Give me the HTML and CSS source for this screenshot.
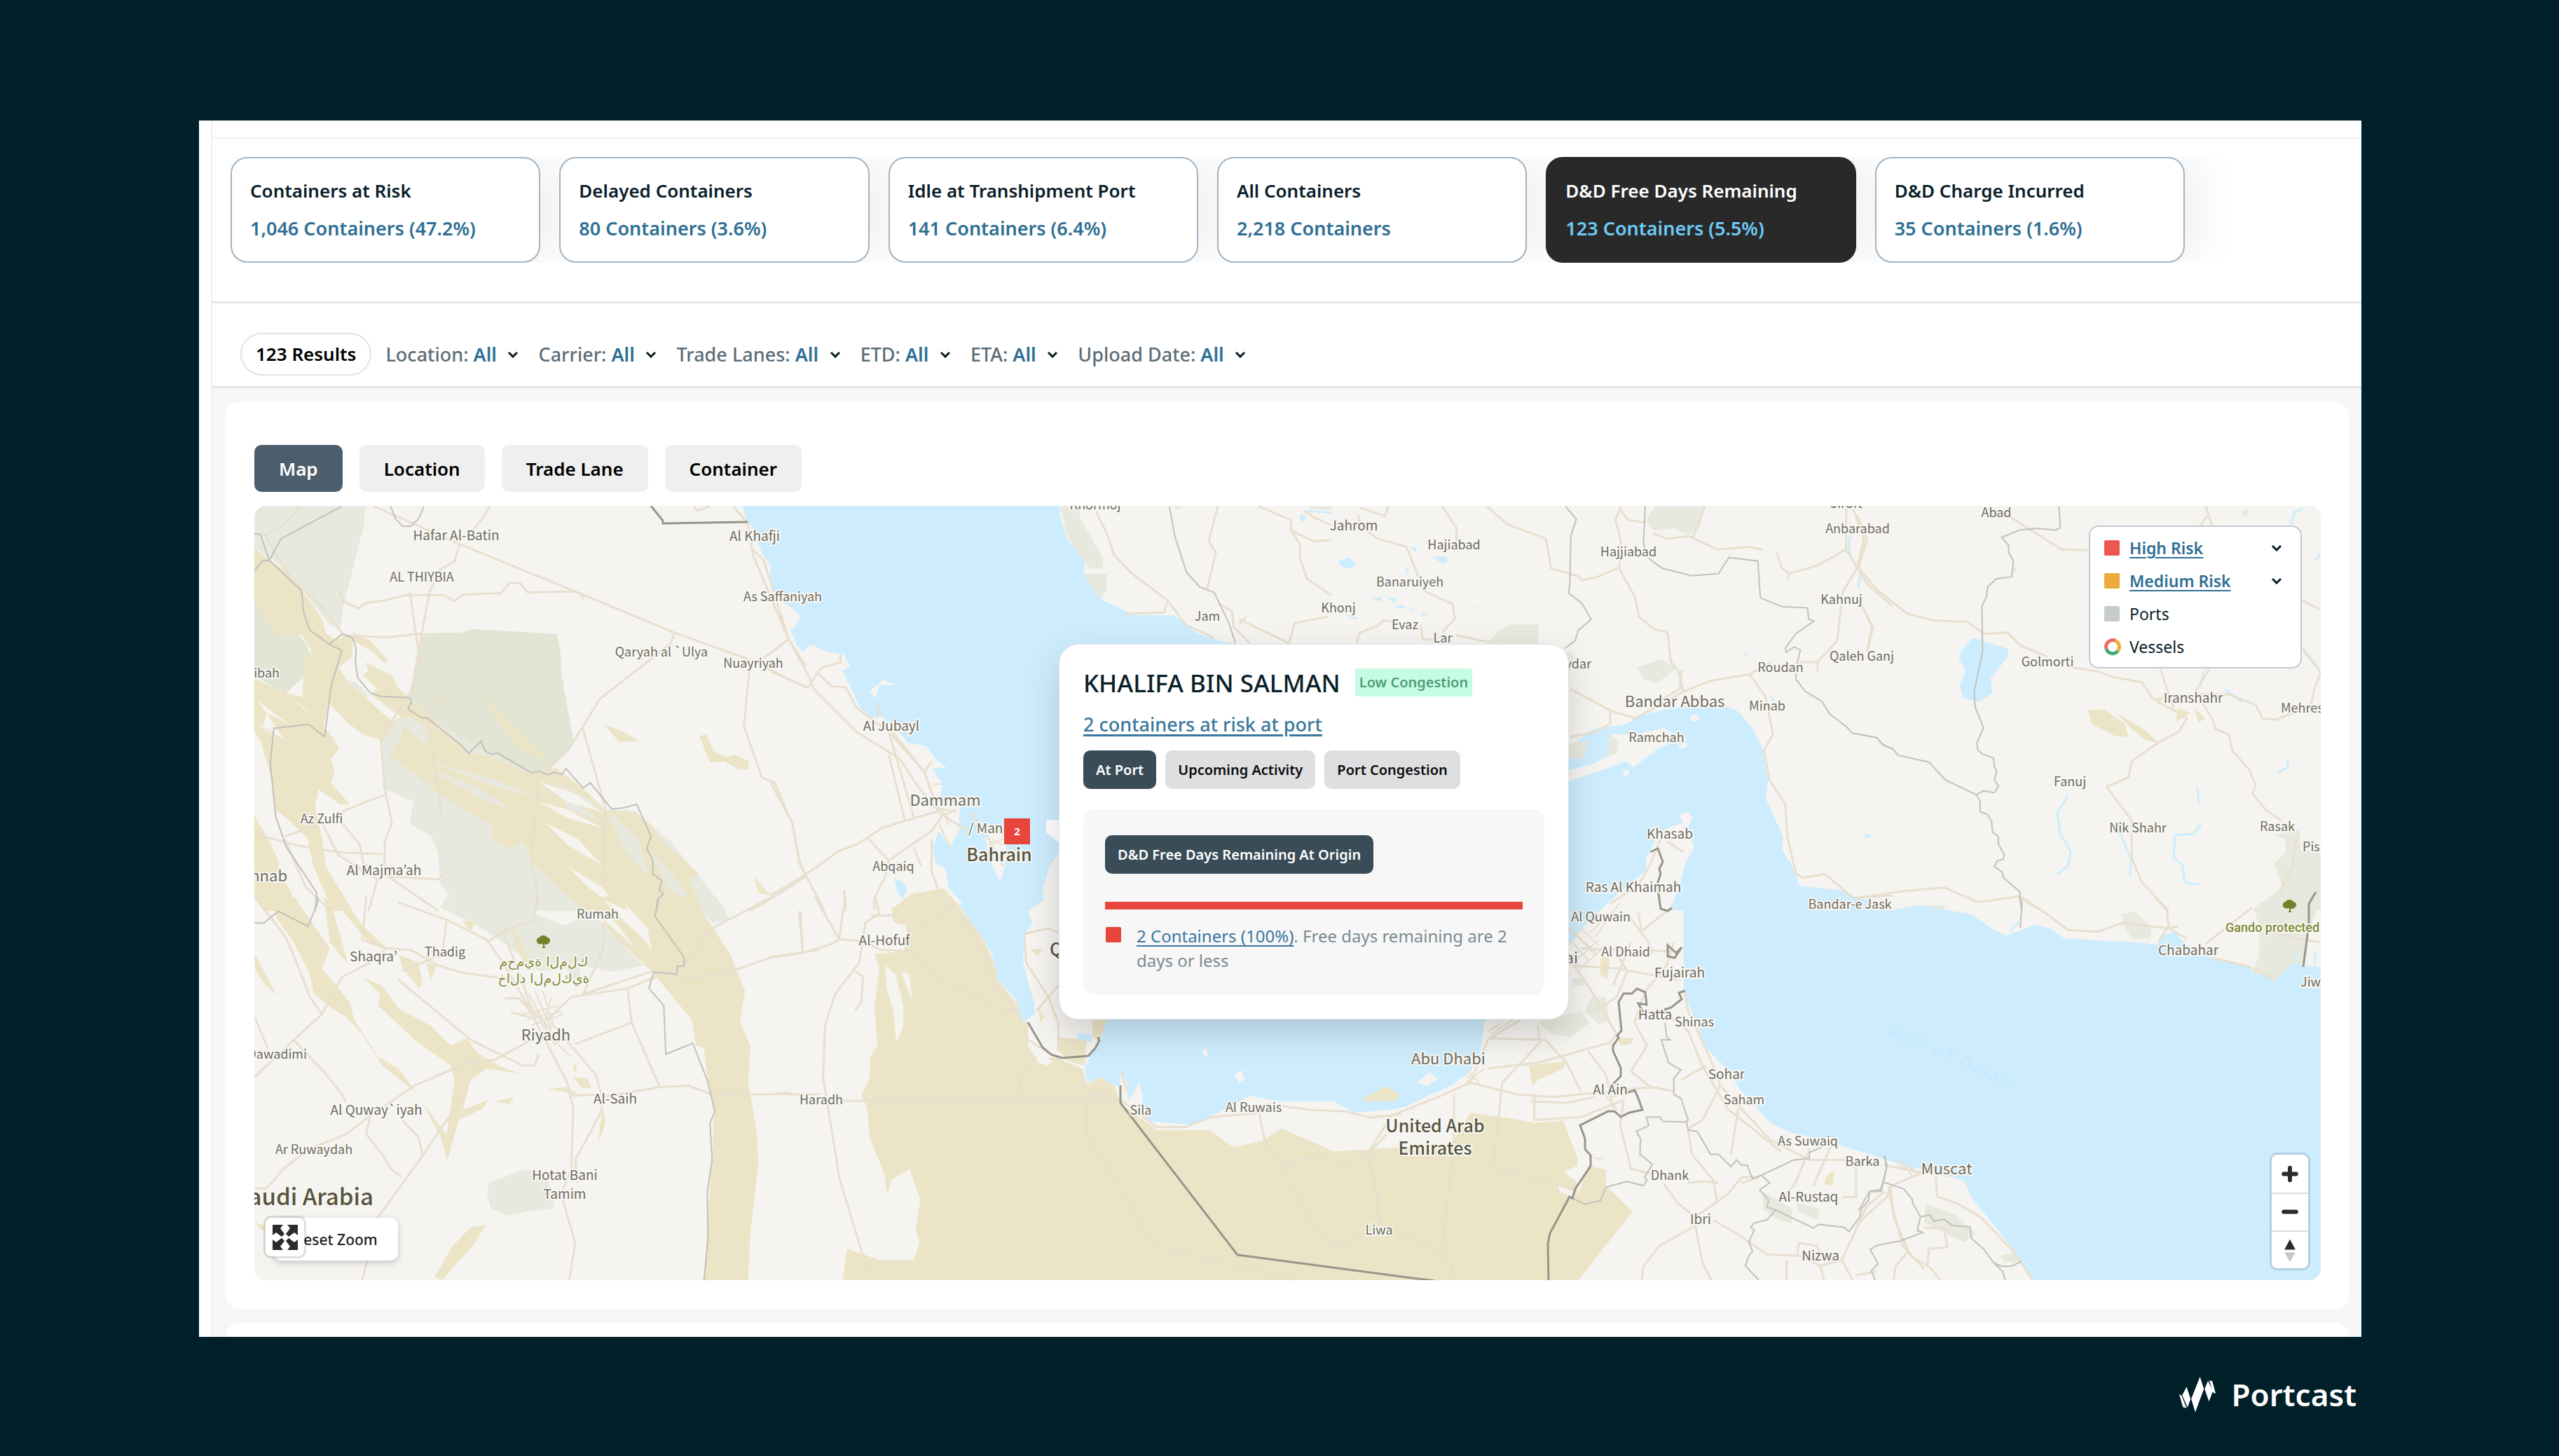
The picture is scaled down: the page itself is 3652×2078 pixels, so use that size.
FILE: index.html
```html
<!DOCTYPE html>
<html lang="en">
<head>
<meta charset="utf-8">
<title>Portcast – D&amp;D Free Days Remaining</title>
<link rel="stylesheet" href="styles.css">
</head>
<body>
<main class="frame">
  <div class="app">
    <div class="topbar"></div>
    <section class="summary">
      <div class="cards">
        <button class="card"><span class="card-title">Containers at Risk</span><span class="card-value">1,046 Containers (47.2%)</span></button>
        <button class="card"><span class="card-title">Delayed Containers</span><span class="card-value">80 Containers (3.6%)</span></button>
        <button class="card"><span class="card-title">Idle at Transhipment Port</span><span class="card-value">141 Containers (6.4%)</span></button>
        <button class="card"><span class="card-title">All Containers</span><span class="card-value">2,218 Containers</span></button>
        <button class="card card-active"><span class="card-title">D&amp;D Free Days Remaining</span><span class="card-value">123 Containers (5.5%)</span></button>
        <button class="card"><span class="card-title">D&amp;D Charge Incurred</span><span class="card-value">35 Containers (1.6%)</span></button>
      </div>
    </section>
    <section class="filters">
      <span class="results">123 Results</span>
      <label class="filter">Location: <select><option>All</option></select><svg class="chev" viewBox="0 0 16 10"><path d="M2 2l6 6 6-6"/></svg></label>
      <label class="filter">Carrier: <select><option>All</option></select><svg class="chev" viewBox="0 0 16 10"><path d="M2 2l6 6 6-6"/></svg></label>
      <label class="filter">Trade Lanes: <select><option>All</option></select><svg class="chev" viewBox="0 0 16 10"><path d="M2 2l6 6 6-6"/></svg></label>
      <label class="filter">ETD: <select><option>All</option></select><svg class="chev" viewBox="0 0 16 10"><path d="M2 2l6 6 6-6"/></svg></label>
      <label class="filter">ETA: <select><option>All</option></select><svg class="chev" viewBox="0 0 16 10"><path d="M2 2l6 6 6-6"/></svg></label>
      <label class="filter">Upload Date: <select><option>All</option></select><svg class="chev" viewBox="0 0 16 10"><path d="M2 2l6 6 6-6"/></svg></label>
    </section>
    <div class="content">
      <section class="panel">
        <nav class="tabs">
          <button class="tab tab-active">Map</button>
          <button class="tab">Location</button>
          <button class="tab">Trade Lane</button>
          <button class="tab">Container</button>
        </nav>
        <div class="map">
          <svg class="chart" viewBox="363 722 2949 1105" role="img" aria-label="Map of the Persian Gulf">
            <rect class="land" x="363" y="722" width="2949" height="1105"/>
            <!-- reserves -->
            <g class="green">
              <g transform="matrix(.5102 0 0 .3827 350 700)">
                <path d="M25 59H337L330 140 275 430 265 520 235 500 160 370 110 290 25 210Z"/>
                <path d="M385 930 430 850 460 780 640 950 800 1050 1010 1190 1090 1195 1190 1310 1270 1440 1345 1568H550L590 1540 545 1470 540 1350 520 1290 460 1240 470 1160 385 1110Z"/>
                <path d="M280 705 310 715 348 765 335 780Z"/>
                <path class="green-deep" d="M25 330 90 470 165 560 185 620 160 700 110 760 25 690Z"/>
                <path class="green-deep" d="M495 533 605 530 635 517 740 525 872 535 882 610 885 690 918 935 905 965 850 1045 800 1055 640 950 520 850 460 775 468 720Z"/>
              </g>
              <g transform="matrix(.574 0 0 .4082 270 1280)">
                <path d="M640 0H870L860 60 935 100 1000 60 1030 90 1100 200 1130 240 1050 262 970 240 975 310 960 320 940 250 870 260 800 180 740 120 625 35Z"/>
                <path d="M1240 0H1310L1345 80 1300 90Z"/>
                <path d="M745 1000 830 955 880 960 910 1050 905 1090 840 1100 790 1115 750 1090 740 1040Z"/>
              </g>
              <g transform="matrix(.5102 0 0 .3827 1100 700)"><path d="M1120 59H1160L1140 70ZM1500 59H1568V72L1520 70Z"/></g>
              <g transform="matrix(.5102 0 0 .3827 1900 700)">
                <path d="M905 59H1045L1030 140 1000 165 960 140 900 150 880 110ZM435 570 470 520 500 500 580 500 578 575ZM855 660 925 630 965 665 910 720 870 700ZM660 600 678 610 672 660 660 700Z"/>
              </g>
              <g transform="matrix(.5102 0 0 .4082 1950 1280)">
                <path d="M480 440 600 400 625 440 570 490 520 480ZM630 350H670L680 430 650 445 610 400ZM575 285H610V310H580ZM1110 1030 1190 1090V1140L1150 1130 1110 1090ZM1200 1070 1270 1090 1260 1130 1210 1100Z"/>
              </g>
              <g transform="matrix(.4783 0 0 .3827 2650 700)">
                <path d="M1240 1285 1320 1265 1325 1340 1384 1350V1568H1180L1270 1480 1245 1390 1280 1350 1278 1300ZM1150 75 1165 72 1168 92 1152 94Z"/>
              </g>
              <g transform="matrix(.4783 0 0 .4974 2650 1280)">
                <path d="M1235 0H1384L1345 110 1330 190 1250 240 1180 215 1200 170V90L1185 30ZM790 50 830 42 880 90 875 120 820 120 795 80ZM205 880 290 910 355 965 320 992 200 935ZM425 1030 470 1020 490 1048 440 1048ZM90 42 180 25H260V40L100 52Z"/>
              </g>
            </g>
            <!-- sand -->
            <g class="sand">
              <g transform="matrix(.5102 0 0 .3827 350 700)">
                <path d="M25 210 70 265 120 300 160 375 185 420 215 480 225 530 250 555 300 540 300 620 262 660 290 720 410 860 430 850 385 935 330 910 290 870 232 790 220 880 245 920 262 965 240 1000 250 1050 240 1090 292 1170 265 1170 205 1115 195 1180 215 1300 225 1400 270 1500 300 1568H245L190 1400 175 1300 130 1240 85 1190 70 1060 45 940 25 900V700L100 750 160 770 165 640 185 600 160 540 80 540 25 400Z"/>
                <path d="M300 530 350 560 400 635 390 643 350 595 300 560Z"/>
                <path d="M335 640 410 690 430 740 460 775 520 850 630 980 680 990 800 1055 870 1035 960 1130 1010 1195 1090 1200 1130 1240 1160 1300 1270 1430 1240 1450 1280 1568H950L930 1540 880 1490 800 1380 780 1310 740 1335 690 1300V1250L600 1180 520 1110 480 1060 400 990 440 920 440 850 350 760 370 740 330 690 345 670Z"/>
                <path d="M25 1210 60 1290 90 1370 100 1440 130 1500V1568H50L25 1500ZM525 760 545 765 582 830ZM655 768 690 800 850 1000 830 1000 760 960 700 850ZM1005 875 1050 895 1102 935 1045 937ZM1270 915 1290 910 1310 970 1345 995 1370 985 1410 1010 1405 1040 1380 1040 1340 1010 1300 1015ZM1422 1440 1470 1510 1435 1500ZM932 385 952 390 945 410Z"/>
                <path class="streak-green" d="M430 860 500 950 520 900 460 840ZM490 1000 700 1080 830 1150 690 1100ZM500 1030 640 1100 760 1200 660 1150ZM860 1080 1000 1180 940 1160ZM1010 1190 1100 1300 1130 1440 1060 1340ZM1130 1340 1200 1440 1260 1560 1180 1480ZM880 1120 990 1230 900 1190Z"/>
                <path class="streak" d="M820 1085 920 1130 1000 1200 900 1160ZM820 1160 900 1190 1000 1260 900 1220ZM840 1240 930 1300 1000 1400 900 1320ZM900 1400 1000 1480 1040 1560 960 1480ZM30 780 120 870 60 830ZM60 830 110 930 50 880ZM120 760 200 850 160 810ZM25 850 90 930 110 950 60 900Z"/>
              </g>
              <g transform="matrix(.574 0 0 .4082 270 1280)">
                <path d="M200 0H262L310 100 350 180 330 250 400 370 410 430 470 560 520 600 565 685 480 590 430 480 390 420 345 380 310 340 300 270 260 160 220 80ZM350 0H382L430 100 500 190 570 230 580 300 572 320 530 250 520 200 440 150 400 80ZM335 0 352 20 395 235 350 160ZM590 230 615 240 600 290ZM163 200 190 270 218 345 190 310 163 250ZM435 285 480 310 520 390 600 450 650 520 690 495 720 550 770 590 825 620 740 600 700 640 680 745 745 710 730 740 670 780 642 920 625 840 580 720 640 830 660 640 650 590 560 500 470 380 475 340ZM738 1147 700 1155 655 1220 610 1330 630 1340 665 1280 700 1230Z"/>
                <path d="M945 0 1020 60 1050 130 1150 260 1220 380 1250 430 1260 520 1280 530 1290 650 1305 750 1300 900 1290 1100 1280 1340H1390L1395 1180 1415 930 1412 830 1390 650 1395 520 1370 440 1382 330 1345 200 1280 60 1250 0Z"/>
                <path d="M795 95 815 130 860 260 830 230ZM890 670 940 665 970 692ZM955 630 990 635 1000 670 975 665ZM955 580 965 600 958 615ZM1030 740 1035 790 1017 865 1022 790ZM680 85 710 85 700 125ZM760 715 808 700 795 725ZM163 1140 190 1150 186 1170Z"/>
                <path class="streak" d="M1030 10 1110 60 1140 160 1070 70ZM1080 20 1140 110 1150 190ZM1000 40 1060 90 1110 180Z"/>
              </g>
              <g transform="matrix(.574 0 0 .4082 1100 1280)">
                <path d="M300 40 380 5 440 -10 520 120 555 230 570 300 610 370 640 450 640 520 665 580 700 560 775 600 785 655 820 630 855 660 868 720 960 815H1090L1150 875 1220 855 1270 810 1400 890 1568 877V1345H178L190 1230 270 1270H355L370 1210 360 1160 372 1060 345 950 300 990 290 1040 280 960 245 840 240 740 225 690 245 640 248 560 265 520 258 380 270 250 258 200 330 190 345 100 305 90Z"/>
                <path d="M718 490 785 500 780 590 740 575 710 530ZM800 430H835L815 510 800 490ZM645 185 675 180 665 205ZM665 385 680 420 670 440Z"/>
                <path class="streak" d="M285 240 310 270 330 380V450L312 510 305 400 288 320ZM325 260 345 270 352 370Z"/>
                <path class="streak" d="M660 560 700 570 690 590 665 580Z"/>
              </g>
              <g transform="matrix(.5102 0 0 .4082 1950 1280)">
                <path d="M-10 886 240 860 290 755 380 770 470 790 550 782 590 910 590 1000 590 1050 620 940 670 955V1010L745 1100 590 1345H-10ZM455 590 560 575 550 600 480 640 465 660ZM655 200 680 220 675 290 655 270ZM700 490 748 495 740 515 710 520ZM630 912 670 912 655 920ZM1285 980 1308 955 1305 1010 1280 1005Z"/>
                <path class="streak" d="M550 960 592 940V1000ZM535 1010 580 1030 575 1050 540 1030Z"/>
              </g>
              <g transform="matrix(.4783 0 0 .3827 2650 700)">
                <path d="M690 820 735 815 800 870 810 920 770 915 700 870ZM775 830 850 885 905 945 860 930 820 890ZM885 775 915 768 905 790ZM960 810 995 830 950 865ZM1005 810 1040 850 1020 865Z"/>
              </g>
              <path d="M1272 1298 1300 1276 1347 1268 1372 1296 1360 1310 1280 1310Z"/>
            </g>
            <!-- water -->
            <path class="sea" d="M1059 722 1067 745 1072 750 1080 773 1090 794 1100 807 1098 830 1107 853 1130 868 1143 880 1134 895 1128 899 1138 922 1146 930 1156 920 1184 931 1204 933 1213 951 1202 957 1215 983 1227 1010 1245 1025 1255 1021 1278 1040 1296 1060 1322 1065 1337 1085 1351 1096 1330 1096 1345 1119 1342 1136 1370 1152 1368 1188 1355 1209 1340 1186 1331 1209 1335 1232 1350 1240 1353 1266 1375 1291 1367 1288 1398 1333 1416 1362 1424 1398 1450 1427 1460 1460 1476 1447 1476 1431 1467 1402 1460 1370 1463 1333 1473 1317 1467 1300 1490 1284 1488 1270 1498 1236 1511 1217 1560 1180 1600 1250 1610 1400 1579 1456 1571 1484 1559 1500 1548 1525 1551 1545 1571 1537 1588 1549 1599 1551 1598 1525 1608 1545 1610 1570 1617 1562 1625 1545 1631 1562 1628 1586 1640 1600 1697 1605 1720 1598 1749 1582 1783 1564 1826 1572 1904 1572 1932 1588 1984 1584 2005 1580 2042 1562 2072 1549 2098 1529 2113 1500 2118 1460 2200 1370 2240 1349 2256 1327 2287 1296 2323 1263 2349 1243 2349 1224 2364 1197 2380 1182 2402 1174 2397 1163 2410 1159 2415 1167 2408 1182 2418 1209 2405 1232 2397 1263 2387 1289 2386 1298 2402 1300 2403 1415 2417 1451 2435 1496 2460 1521 2486 1558 2526 1602 2557 1617 2603 1627 2641 1639 2680 1651 2725 1666 2741 1668 2803 1685 2813 1708 2841 1743 2875 1785 2894 1820 2901 1828H3313V1380L3291 1379 3272 1374 3248 1398 3214 1387 3210 1380 3157 1368 3119 1347 3104 1330 3083 1335 3080 1348 3047 1345 2992 1342 2946 1339 2925 1325 2906 1320 2863 1335 2846 1327 2813 1305 2770 1297 2738 1292 2693 1300 2664 1284 2650 1282 2635 1272 2568 1264 2558 1236 2543 1213 2545 1194 2520 1140 2523 1113 2515 1067 2499 1037 2479 1014 2461 1008 2390 1010 2339 1021 2323 1033 2272 1041 2241 1067 2000 1000 1763 919 1738 914 1707 903 1676 878 1620 878 1574 857 1562 834 1546 815 1549 799 1523 769 1513 738 1512 722Z"/>
            <g class="sea">
              <g transform="matrix(.5102 0 0 .3827 1900 700)"><path d="M20 260 50 250 70 275 50 292 25 282ZM285 248 320 245 328 262 310 275ZM110 402 145 397 135 415ZM155 400 182 402 180 420ZM172 435 200 425 205 440ZM215 435 240 452 225 448ZM250 460 270 455 258 470ZM218 210 240 215 235 230ZM208 290 218 295 212 315ZM398 435 414 436 406 443ZM1155 605 1166 610 1162 625ZM1488 1278 1515 1290 1495 1298ZM1232 760 1240 790 1230 785ZM32 455 75 475 65 482Z"/></g>
              <g transform="matrix(.4783 0 0 .3827 2650 700)"><path d="M345 550 430 582 452 590 450 620 400 700 403 755 365 790 318 775 307 730 325 670 305 630 310 600ZM470 285 478 295 468 305Z"/></g>
              <g transform="matrix(.5102 0 0 .3827 1100 700)"><path d="M345 1445 370 1460 382 1490 370 1525 355 1500ZM1480 90 1500 95 1490 118 1480 108Z"/></g>
              <path d="M1536 1475 1560 1477 1556 1487 1540 1484Z"/>
            </g>
            <g class="land">
              <g transform="matrix(.5102 0 0 .3827 1900 700)"><path d="M660 1045 730 1020 780 990 805 940 780 908 850 912 930 885 960 910 940 950 915 960 845 1032 825 1010 740 1050 660 1085ZM970 950 998 940 990 960 975 965ZM820 1040 835 1045 825 1070 815 1060Z"/><circle cx="1016" cy="849" r="13"/><path class="green" d="M665 945 722 935 700 1000 665 1000ZM780 908 805 940 798 980 720 1010 770 985Z"/></g>
              <path d="M1406 1193 1427 1188 1437 1198 1434 1236 1427 1259 1416 1236 1409 1209Z"/>
              <path d="M1241 986 1262 970 1278 978 1255 978 1249 997ZM1715 1500 1722 1496 1724 1506 1718 1508ZM1762 1533 1772 1528 1776 1540 1768 1546ZM2022 1545 2040 1530 2052 1540 2036 1550Z"/>
              <path class="sand" d="M1944 1568 1978 1550 1998 1562 1992 1571 1950 1572Z"/>
              <path class="green" d="M1513 722H1538L1543 742 1574 796 1574 811 1554 811 1523 765ZM1546 819 1579 819 1579 842 1570 856Z"/>
            </g>
            <!-- streams -->
            <g class="stream">
              <path d="M2951 1136 2936 1160 2940 1190 2955 1215 2952 1235 2936 1248M3027 1170 3026 1190 3041 1225 3040 1250M3141 1176 3131 1190 3104 1192 3102 1224 3115 1235 3118 1260 3138 1262M3136 1122 3138 1146M3265 1082V1095L3250 1104M3286 727 3274 731 3270 748M2641 762 2638 780 2643 800M3145 958 3140 980M3175 984 3200 1002M3288 927 3310 955M1866 729 1900 732M2655 820 2652 838M3312 790 3304 800M2868 1330 2882 1315M3275 1370 3273 1354M3303 1382 3304 1358"/>
            </g>
            <!-- roads -->
            <g class="road">
              <g transform="matrix(.5102 0 0 .3827 350 700)">
                <path d="M360 59 600 200 920 375 1200 530 1420 635 1568 735M600 200 585 265 545 295 515 380 500 490 465 745 410 860 380 935 390 1110 410 1240 390 1310V1400M640 145 660 110 685 59M450 390H555L585 413 610 388 715 383 740 345 768 345 790 380 920 377M450 390 390 410 335 420 318 440 275 415 262 370M495 533 395 548 275 540 215 435 130 330 100 270 55 165 105 130 155 59M1200 530 1190 570 990 780 940 890 905 965 820 1075 800 1390 815 1470V1568M945 890 1008 1190 1000 1460M1410 670 1395 880 1445 1070 1480 1090 1530 1240 1550 1380 1568 1440M1365 59 1405 120 1420 240 1520 555 1568 655M1415 215 1450 260 1520 555 1450 625M1568 1440 1450 1540 1410 1568M550 1210 460 375M1255 59 1265 75 1300 59"/>
                <path d="M25 1280 150 1325 270 1350 385 1357M270 1200 320 1170 390 1135M270 1240 320 1320 330 1390 400 1440 540 1568M215 1240 260 1360 370 1450 345 1568M400 1440 540 1450 565 1420M110 1300 170 1480 240 1568M195 1250 110 1290"/>
              </g>
              <g transform="matrix(.574 0 0 .4082 270 1280)">
                <path d="M163 1020H192L235 950 300 880 390 830 450 765 560 660 700 575 760 570 850 500M163 420 195 530M163 630 260 500 330 410 380 280 450 230 490 180 550 185 620 240 680 265 780 285M260 500 340 620 380 690 390 720M450 765 440 830 480 900 500 950 528 980M530 780 570 840 580 900M720 570 670 720 580 905 470 1120 430 1340M520 290 700 500 830 590H858L870 550M520 20 640 80 740 150 780 230 850 400 870 460 940 650 955 740 950 950 925 1040 960 1210 945 1340M780 120 830 300 860 440M900 440 1010 620 1025 690 950 695M1025 700 1170 665 1240 660 1300 690H1440L1568 690M1170 665 1100 440 1090 320M960 515 1100 440M890 430 950 350 1090 320 1230 240 1300 110 1450 0M980 340 1150 260 1250 285 1370 250 1450 210 1568 185M980 340 1030 180V90M1520 50 1525 190M1025 700 1025 750 960 920 965 1000M640 80 630 200 530 260M440 0 430 150 490 180M163 0 240 140 270 240 300 350 330 410M870 0 855 80 780 120 740 160M785 355H820L850 400M800 405 850 420"/>
                <path class="dense" d="M845 340 890 460M860 330 900 460M880 330 905 450M830 410 920 380M840 430 925 400M850 450 930 410M850 380 910 520M865 400 920 510M900 350 880 460M845 400 880 430M890 480 950 560"/>
              </g>
              <g transform="matrix(.5102 0 0 .3827 1100 700)">
                <path d="M0 400 50 555 105 690 120 740 240 900 360 1000 410 1100 465 1190M0 675 105 735 130 680 145 660 195 640V610M130 680 170 730 210 735 240 810 330 900 430 1050 470 1200M0 605 50 555M0 1510 95 1435 190 1345 240 1320 270 1295 310 1260 380 1230 470 1195M0 1090 60 1240 80 1390 150 1568M330 900 400 1220M330 985 375 1230M270 1295 330 1380 320 1440 290 1520V1568M330 1380 450 1270 480 1210M340 900 430 1050 450 1010M450 1300V1420L480 1530M205 1490 210 1568M400 1330 420 1400M470 1200 550 1270M560 1200 610 1300 650 1400"/>
                <path d="M910 80 940 160 960 240 1010 310 1110 410 1160 500 1240 550M990 460 1100 455 1110 410M1250 59 1225 190 1245 230 1220 370M1250 420 1290 450 1295 510 1340 570M1310 480 1450 570 1465 495 1560 470M1365 59 1455 110 1455 150 1480 200 1480 250 1500 330 1568 390M1310 500 1330 470M1455 150 1520 190 1568 185M1490 75 1520 100 1568 130"/>
                <path class="dense" d="M440 1100 480 1210M460 1180 520 1200M470 1220 520 1190M480 1190 500 1250M450 1095H480M290 800 310 840M300 790 300 850M620 1310 650 1320M610 1320 650 1300M470 1240 500 1330"/>
              </g>
              <g transform="matrix(.5102 0 0 .3827 1900 700)">
                <path d="M75 90 80 130 130 180 210 210 240 310 260 375 340 425 345 480 310 530M80 65 150 95 160 59M310 59 350 140V190M435 59 490 125 600 180 615 290 690 320 700 335 750 320 800 290M810 59 795 110 810 190 805 290 850 400 860 470 900 515 940 530 950 640 970 670 985 750 850 850 780 820 668 740M880 120 830 110 808 70M900 160 940 180 1000 170 1080 220 1130 215 1160 210 1205 220M1045 59 1010 180M1245 230 1260 290 1280 310 1275 330M1280 310 1360 280 1440 220V59M1460 70 1490 180 1470 290 1430 380 1415 560 1360 640 1310 640M1440 220 1500 350 1568 430M1485 430 1515 510 1500 600M985 750 1060 710 1170 685 1230 640M1170 685 1215 770 1235 910 1210 970 1225 1080 1270 1170 1275 1290 1300 1430 1320 1445 1380 1430 1460 1520 1568 1510M668 920 740 900 780 870V820M980 670 975 740 910 790M350 540 440 565M250 500 255 555 290 555M70 570 80 530 130 505 145 485 175 490M1360 640V675M940 1310 985 1350M860 1470 890 1400 930 1270M780 1540 840 1490"/>
              </g>
              <g transform="matrix(.574 0 0 .4082 1100 1280)">
                <path d="M0 690 40 685 75 695M175 713H860M0 212 80 195 150 165 170 148 110 0M170 148 235 155 270 185 350 190 380 230 420 305H460L570 395H610L640 500 740 590 770 620 790 690 840 690 870 710 960 805 1030 805 1095 770 1220 755M260 0 270 60 235 90 220 230 160 340 135 450 130 630 145 760 170 980 240 1305M250 65H300L340 95V190M210 260 230 280 225 370 210 395M440 0 480 80 530 200 550 290 610 395M455 40 400 80 360 130M660 560 625 630 610 710M630 130 690 110 715 125M630 130 635 230 690 350 660 400M690 350 715 310M690 350 715 440V540M787 715V840L870 1020 950 1220 1310 1340M1215 760 1228 850 1265 930 1310 1050 1330 1110 1410 1225 1470 1185M1265 930 1360 908 1430 930 1480 910 1530 830M1485 910 1510 1050V1140M1265 730 1340 745 1430 750 1490 772 1568 760M870 610 885 680M70 50 80 190M185 0 170 148"/>
              </g>
              <g transform="matrix(.5102 0 0 .4082 1950 1280)">
                <path d="M0 772 70 765 190 705 290 650 340 500 430 430M290 650 420 690 520 700 600 690 680 680 800 665 860 680M340 600 480 580 680 510 700 480 620 310 580 240M340 495 500 500 560 580 600 680M480 450 485 510 380 650 355 950 580 1020M245 690V860L210 1240M0 905 20 980 40 1150M470 690V780L600 770 660 740 720 710M460 715 560 720 640 700M620 540 670 620 690 740M70 765 0 905M90 1170 160 1210 210 1250 240 1290 245 1340M700 200 730 260 700 350 640 400M580 240 700 250 870 290M600 180 850 190M760 50 770 120 860 30M730 60 790 160 800 200M890 330 900 400 960 560 990 660 1130 850 1240 920 1420 920M840 410 900 470 940 590 1010 740 1160 890M990 660 940 780 900 810M880 640 950 590M750 440 785 520 740 610 800 670M720 710 710 800 740 950 800 970M900 1000 940 995 985 1000M830 1000 870 1070 920 1120 1010 1040 1050 980 1100 980M980 1060 970 990 910 900 900 810M920 1150 820 1220 775 1290 770 1340M920 1150 940 1280 965 1340M970 1130 1040 1180 1120 1250 1210 1255 1270 1290 1330 1270 1360 1190 1400 1080 1450 1030M1205 1250 1210 1210 1260 1220 1275 1260M1175 1340V1270M1270 1290 1280 1340M1330 1270 1360 1340M1460 1030 1500 1220 1560 1300M1040 740 1020 900M1050 1000 1100 980M1300 870 1250 1010M1240 880 1200 1000 1170 1050M1370 920V1050H1330M530 60 640 200M740 160 690 310M860 160 840 240 780 330 750 440"/>
                <path class="dense" d="M570 150 620 220M580 130 640 190M600 110 650 170M570 240 650 150M590 260 660 180M620 130 690 50M640 140 710 20M340 470 380 440M280 600 320 660M270 620 310 640M280 650 330 600M350 480 410 430M1480 920 1540 960M1490 940 1550 970M1500 930 1530 980M660 680 700 740M680 700 720 690"/>
              </g>
              <g transform="matrix(.4783 0 0 .3827 2650 700)">
                <path d="M0 90 30 180 5 290 60 370 150 460 230 485 330 490 380 535 450 530 490 580 570 620M460 100 610 220 690 223M1040 59 1060 130M1045 95 1025 130M640 660 720 675 760 695 850 715 885 780 960 830 985 850 960 900 900 940 820 1010 810 1070 745 1105 790 1180 820 1230V1370L850 1460 930 1568M905 665 945 810M1050 670 1010 750 1060 850 1070 890 1110 910 1120 970 1170 1040 1190 1100 1180 1130 1220 1190 1265 1230M1010 760 1110 760 1190 800 1210 850 1250 855 1300 830M1328 410 1384 445M1328 590 1384 680 1365 740 1355 800M0 1520 60 1510 130 1495 260 1480 360 1535 480 1515 540 1560M1310 1300 1300 1400 1260 1500M15 430 45 510 30 600"/>
              </g>
              <g transform="matrix(.4783 0 0 .4974 2650 1280)">
                <path d="M490 0 560 45 630 95 720 100 790 75 880 85 930 90 985 120M890 0 925 40 930 90M900 130 925 90 960 85M1040 135 1180 30M1060 175 1170 200 1250 240M1200 90 1310 120 1384 130M80 770 190 790 280 800M0 940 90 860 100 830 200 790M100 830 110 920 160 1030 220 1065 250 1100M235 800 240 860 300 880 370 920 400 950 470 1020 525 1100M210 1060 215 1010 270 1005 260 950 200 950M0 1085 60 1075M110 1100 115 1060 150 1020"/>
              </g>
            </g>
            <!-- regional and national borders -->
            <g class="border">
              <g transform="matrix(.5102 0 0 .3827 350 700)">
                <path d="M270 59 100 180 67 260 158 375 163 455 180 520 235 573 270 597 240 730 222 918 177 872 80 887 70 1015 85 1215 115 1330 200 1500 195 1568M25 162H42L67 260 48 262 25 300M235 573 272 535 300 550 310 590 308 640 315 700 350 755 380 768 460 773 465 790 455 815 490 845 510 850 600 945 625 980 660 935 670 970 690 985 705 978 800 1053 822 1047 845 1060 865 1050 885 1060 897 1037 945 1110 965 1090 1025 1188 1060 1183 1095 1170 1135 1290 1123 1335 1140 1380V1430L1165 1455 1158 1490 1170 1505 1153 1525 1150 1568M407 59 420 105 440 133H463L485 105 500 59"/>
              </g>
              <g transform="matrix(.574 0 0 .4082 270 1280)"><path d="M163 90 185 92 222 50 295 103 320 20V0M1168 0 1158 68 1230 210V242H1214L1212 270 1155 263 1143 320 1180 380 1185 550 1252 512 1288 640 1307 750 1295 790 1300 920 1288 1030 1290 1200 1280 1340"/></g>
              <g transform="matrix(.5102 0 0 .3827 1100 700)"><path d="M1115 59 1130 170 1163 305 1200 360 1240 380 1280 490 1300 570"/></g>
              <g transform="matrix(.5102 0 0 .3827 1900 700)"><path d="M655 59 685 107 670 170 667 350 663 382 700 420 727 480 690 523 682 560 652 590M878 59 873 200 890 255 925 290 1008 318 1083 310 1112 250 1193 263 1200 400 1260 433 1332 438 1335 480 1350 487 1300 533 1270 587 1272 603 1295 583 1312 595 1298 670 1300 705 1325 748 1372 787 1395 835 1440 880 1457 905 1525 922 1545 950 1568 962"/></g>
              <g transform="matrix(.4783 0 0 .3827 2650 700)"><path d="M603 59 607 138 593 148 540 141 487 147 432 175 453 205V232L467 262 462 322 415 330 390 360 387 395 373 432 375 600 350 750 353 808 378 885 358 940 360 967 375 983 408 998 410 1030 417 1048 410 1080 423 1102 410 1127 377 1120 357 1135 265 1080 215 1013 122 987 107 963 77 948 60 922 0 908M357 1135 368 1160V1198L390 1208 402 1235 405 1275 422 1290V1317L440 1360 437 1375 418 1382 410 1403 433 1422 438 1445 487 1497V1530L492 1568"/></g>
              <g transform="matrix(.4783 0 0 .4974 2650 1280)"><path d="M485 0 493 20 487 90M80 743 90 770 78 818 140 838 165 868 167 880 190 918 180 957 197 963 130 987 60 1000 40 1012 63 1053 43 1073 55 1100M190 918 218 913 230 930 260 925 285 943 337 947 342 980 378 1010 408 1050 430 1060H460L490 1047M408 1050 435 1075 443 1100M78 818 70 840 38 845 5 900"/></g>
              <g transform="matrix(.5102 0 0 .4082 1950 1280)"><path d="M835 440 840 490 850 500 825 500 845 580 880 605 860 635V690L880 705 900 780 895 787 830 785 820 770H783L790 800 755 820 767 845 765 900 800 935 778 980 785 990 775 1010 730 995 670 1015 655 1062 612 1075 570 1050M895 787 900 815 925 820 963 900H985L1020 943 1035 920 1050 938H1065L1080 985 1105 973 1128 1000 1100 1025 1125 1060 1120 1085 1145 1095 1120 1130 1085 1140 1075 1155 1085 1165 1070 1205 1080 1240 1070 1255 1060 1290 1098 1340M1145 1095 1250 1158 1265 1145 1335 1155 1350 1170 1380 1120 1385 1090 1405 1060 1408 1030 1440 1030 1455 950 1450 905M1105 973 1195 920 1238 915 1240 893 1275 875"/></g>
            </g>
            <g class="border-strong">
              <path d="M929 722 946 743V747L1067 745"/>
              <path d="M1467 1459 1488 1495 1500 1505 1516 1510 1553 1507 1563 1496 1569 1485 1567 1480M1599 1549V1574L1766 1791 2000 1822 2048 1828"/>
              <path d="M2210 1828 2209 1775 2212 1760 2240 1708 2244 1710 2248 1697 2270 1664V1649L2262 1640V1625L2255 1606 2295 1586H2304L2313 1594 2325 1588 2344 1584 2337 1565 2333 1556 2320 1560M2298 1551 2313 1536V1524L2302 1500V1492L2310 1481 2308 1478 2314 1471 2310 1430 2317 1418H2329L2336 1411 2348 1416 2350 1434 2338 1432 2345 1445M2375 1441 2385 1438 2400 1426 2396 1417 2405 1414M2380 1349 2392 1360 2400 1352 2390 1367 2380 1365ZM2355 1216 2366 1211 2373 1230 2368 1240 2370 1247 2365 1262 2370 1297 2380 1300 2386 1296"/>
              <path d="M3305 1273 3295 1290 3295 1320 3287 1380"/>
            </g>
            <g class="labels">
              <text x="651" y="771" class="m">Hafar Al-Batin</text>
              <text x="602" y="830">AL THIYBIA</text>
              <text x="1077" y="772" class="m">Al Khafji</text>
              <text x="1117" y="858">As Saffaniyah</text>
              <text x="944" y="937">Qaryah al `Ulya</text>
              <text x="1075" y="953">Nuayriyah</text>
              <text x="399" y="967" class="end">Qibah</text>
              <text x="459" y="1175">Az Zulfi</text>
              <text x="548" y="1249" class="m">Al Majma’ah</text>
              <text x="410" y="1258" class="l end">Al Mithnab</text>
              <text x="853" y="1311">Rumah</text>
              <text x="533" y="1372" class="m">Shaqra’</text>
              <text x="635" y="1365">Thadig</text>
              <text x="779" y="1485" class="l">Riyadh</text>
              <text x="438" y="1511" class="end">Ad Dawadimi</text>
              <text x="878" y="1575" class="m">Al-Saih</text>
              <text x="537" y="1591" class="m">Al Quway`iyah</text>
              <text x="1172" y="1576">Haradh</text>
              <text x="448" y="1647">Ar Ruwaydah</text>
              <text x="806" y="1684" class="m">Hotat Bani</text>
              <text x="806" y="1711" class="m">Tamim</text>
              <text x="533" y="1720" class="country xl end">Saudi Arabia</text>
              <text x="1262" y="1349" class="m">Al-Hofuf</text>
              <text x="1272" y="1043" class="m">Al Jubayl</text>
              <text x="1349" y="1150" class="l">Dammam</text>
              <text x="1382" y="1189" class="m start">/ Manama</text>
              <text x="1426" y="1229" class="country">Bahrain</text>
              <text x="1275" y="1243">Abqaiq</text>
              <text x="1498" y="1364" class="country start">Qatar</text>
              <text x="1563" y="727">Khormoj</text>
              <text x="1723" y="886">Jam</text>
              <text x="1910" y="874">Khonj</text>
              <text x="1932" y="757" class="m">Jahrom</text>
              <text x="2075" y="784">Hajiabad</text>
              <text x="2012" y="837">Banaruiyeh</text>
              <text x="2005" y="898">Evaz</text>
              <text x="2059" y="917">Lar</text>
              <text x="2324" y="794">Hajjiabad</text>
              <text x="2271" y="954" class="end">Juydar</text>
              <text x="2390" y="1009" class="l">Bandar Abbas</text>
              <text x="2364" y="1059">Ramchah</text>
              <text x="2522" y="1014">Minab</text>
              <text x="2541" y="959">Roudan</text>
              <text x="2657" y="943">Qaleh Ganj</text>
              <text x="2628" y="862">Kahnuj</text>
              <text x="2651" y="761">Anbarabad</text>
              <text x="2635" y="725">Jiroft</text>
              <text x="2383" y="1197" class="m">Khasab</text>
              <text x="2331" y="1273" class="m">Ras Al Khaimah</text>
              <text x="2640" y="1297">Bandar-e Jask</text>
              <text x="2849" y="738">Abad</text>
              <text x="2922" y="951">Golmorti</text>
              <text x="3130" y="1003" class="m">Iranshahr</text>
              <text x="3255" y="1017" class="start">Mehrestan</text>
              <text x="2954" y="1122">Fanuj</text>
              <text x="3051" y="1188">Nik Shahr</text>
              <text x="3250" y="1186">Rasak</text>
              <text x="3286" y="1215" class="start">Pishin</text>
              <text x="3123" y="1363" class="m">Chabahar</text>
              <text x="3283" y="1408" class="start">Jiwani</text>
              <text x="2778" y="1676" class="l">Muscat</text>
              <text x="2327" y="1315" class="end">Umm Al Quwain</text>
              <text x="2252" y="1375" class="l end">Dubai</text>
              <text x="2320" y="1365">Al Dhaid</text>
              <text x="2397" y="1395" class="m">Fujairah</text>
              <text x="2362" y="1455" class="m">Hatta</text>
              <text x="2418" y="1465">Shinas</text>
              <text x="2067" y="1519" class="l">Abu Dhabi</text>
              <text x="2298" y="1562" class="m">Al Ain</text>
              <text x="2464" y="1540" class="m">Sohar</text>
              <text x="2489" y="1576">Saham</text>
              <text x="2580" y="1635">As Suwaiq</text>
              <text x="2658" y="1664">Barka</text>
              <text x="2383" y="1684">Dhank</text>
              <text x="2581" y="1715" class="m">Al-Rustaq</text>
              <text x="2427" y="1747" class="m">Ibri</text>
              <text x="2598" y="1799" class="m">Nizwa</text>
              <text x="2048" y="1616" class="country">United Arab</text>
              <text x="2048" y="1648" class="country">Emirates</text>
              <text x="1968" y="1762">Liwa</text>
              <text x="1628" y="1591">Sila</text>
              <text x="1789" y="1587">Al Ruwais</text>
              <text x="776" y="1379" class="park arabic">م&zwnj;ح&zwnj;م&zwnj;ي&zwnj;ة ا&zwnj;ل&zwnj;م&zwnj;ل&zwnj;ك</text>
              <text x="776" y="1403" class="park arabic">خ&zwnj;ا&zwnj;ل&zwnj;د ا&zwnj;ل&zwnj;م&zwnj;ل&zwnj;ك&zwnj;ي&zwnj;ة</text>
              <text x="3176" y="1330" class="park start">Gando protected area</text>
              <text x="2782" y="1515" class="gulf" transform="rotate(24 2782 1508)">Gulf of Oman</text>
            </g>
            <g class="tree">
              <path id="tree" d="M766 1344c-1-4 2-6 4-6 1-4 9-4 11 0 4 0 6 6 2 8-2 3-5 2-6 1v4c0 1 2 1 2 2h-6c0-1 2-1 2-2v-4c-4 1-8 1-9-3z"/>
              <use href="#tree" x="2492" y="-51"/>
            </g>
          </svg>
          <span class="marker">2</span>
          <svg class="tip" viewBox="0 0 20 34"><path d="M0 0H20V34L0 18Z"/></svg>
          <article class="popup">
            <header class="popup-head"><h2>KHALIFA BIN SALMAN</h2><span class="badge">Low Congestion</span></header>
            <a class="risk-link" href="#">2 containers at risk at port</a>
            <div class="popup-tabs">
              <button class="chip chip-dark">At Port</button>
              <button class="chip">Upcoming Activity</button>
              <button class="chip">Port Congestion</button>
            </div>
            <div class="detail">
              <button class="chip chip-dark">D&amp;D Free Days Remaining At Origin</button>
              <div class="bar"></div>
              <div class="detail-row"><i class="swatch red"></i><p><a href="#">2 Containers (100%)</a>. Free days remaining are 2 days or less</p></div>
            </div>
          </article>
          <ul class="legend">
            <li><i class="swatch high"></i><a href="#">High Risk</a><button class="toggle" aria-label="Expand high risk"><svg class="chev" viewBox="0 0 16 10"><path d="M2 2l6 6 6-6"/></svg></button></li>
            <li><i class="swatch medium"></i><a href="#">Medium Risk</a><button class="toggle" aria-label="Expand medium risk"><svg class="chev" viewBox="0 0 16 10"><path d="M2 2l6 6 6-6"/></svg></button></li>
            <li><i class="swatch ports"></i>Ports</li>
            <li><svg class="ring" viewBox="0 0 24 24"><path stroke="#ee6c66" d="M3 15A9.500 9.500 0 0 1 16 3.500"/><path stroke="#f0b038" d="M16 3.500A9.500 9.500 0 0 1 19.500 18"/><path stroke="#45a871" d="M19.500 18A9.500 9.500 0 0 1 3 15"/></svg>Vessels</li>
          </ul>
          <button class="reset">Reset Zoom</button>
          <button class="full" aria-label="Full screen"><svg viewBox="0 0 36 36"><path d="M0 0H15L11 5 17 13 13 17 5 11 0 15ZM36 0V15L31 11 23 17 19 13 25 5 21 0ZM0 36V21L5 25 13 19 17 23 11 31 15 36ZM36 36H21L25 31 19 23 23 19 31 25 36 21Z"/></svg></button>
          <div class="zoom">
            <button aria-label="Zoom in"><svg viewBox="0 0 52 53"><path d="M26 18V36M17 27H35"/></svg></button>
            <button aria-label="Zoom out"><svg viewBox="0 0 52 53"><path d="M17 26H35"/></svg></button>
            <button aria-label="Reset bearing"><svg viewBox="0 0 52 53"><path class="north" d="M26 11 34 26H18Z"/><path class="south" d="M26 44 34 30H18Z"/></svg></button>
          </div>
        </div>
      </section>
      <section class="panel-next"></section>
    </div>
  </div>
</main>
<footer class="brand">
  <svg viewBox="966 1375 109 107" preserveAspectRatio="none"><path d="M1028 1375 1040 1411 1014 1481 1002 1441ZM988 1405 1000 1441 991 1467 975 1430ZM966 1427 973 1431 988 1469 977 1465ZM1052 1387 1067 1417 1055 1449 1042 1411ZM1056 1385 1065 1388 1075 1425 1067 1422Z"/></svg>
  <span>Portcast</span>
</footer>
</body>
</html>
```
FILE: styles.css
```css
* { box-sizing: border-box; }
body {
  margin: 0;
  background: #02202a;
  color: #0a2029;
  font-family: "Noto Sans", "Open Sans", sans-serif;
  font-size: 26px;
}
button, select { font: inherit; color: inherit; border: 0; margin: 0; padding: 0; background: none; cursor: pointer; }
a { color: #3a789c; text-underline-offset: 4px; }

.frame { margin: 172px 282px 0 284px; padding-left: 17px; background: #fff; }
.app { border-left: 2px solid #f0f0f0; }
.topbar { height: 26px; border-bottom: 2px solid #f0f0f0; }

.summary { padding: 26px 0 55px 26px; border-bottom: 3px solid #e6e6e6; }
.cards {
  display: grid;
  grid-template-columns: repeat(6, 1fr);
  gap: 27px;
  padding-right: 252px;
  overflow: hidden;
}
.card {
  display: flex;
  flex-direction: column;
  align-items: flex-start;
  gap: 20px;
  height: 151px;
  padding: 30px 26px;
  border: 2px solid #9fb4c4;
  border-radius: 24px;
  background: #fff;
  box-shadow: 24px 0 60px rgba(0, 0, 0, .06);
  font-weight: 600;
  line-height: 33px;
  text-align: left;
  white-space: nowrap;
}
.card-value { color: #2f6f94; font-size: 27px; }
.card-active { background: #292929; border-color: #292929; color: #fff; }
.card-active .card-value { color: #6ccaf5; }

.filters {
  display: flex;
  align-items: center;
  gap: 28px;
  padding: 42px 40px 15px;
  border-bottom: 3px solid #e4e4e4;
  font-size: 27px;
  font-weight: 500;
}
.results {
  height: 61px;
  padding: 0 20px;
  margin-right: -8px;
  border: 2px solid #e2e2e2;
  border-radius: 31px;
  color: #000;
  font-size: 26px;
  font-weight: 600;
  line-height: 57px;
}
.filter { display: flex; align-items: center; gap: 7px; color: #5c6d77; }
.filter select { appearance: none; color: #2f6f94; font-weight: 600; }
.chev { width: 16px; height: 10px; fill: none; stroke: #0a1c24; stroke-width: 3; }
.filter .chev { margin-left: 8px; }

.content { padding: 20px 18px 0 19px; background: #f7f7f7; }
.panel { padding: 61px 40px 41px 41px; border-radius: 20px; background: #fff; }
.panel-next { height: 20px; margin-top: 20px; border-radius: 20px 20px 0 0; background: #fff; }
.tabs { display: flex; gap: 24px; margin-bottom: 20px; }
.tab {
  height: 67px;
  padding: 0 35px;
  border-radius: 10px;
  background: #efefef;
  color: #000;
  font-weight: 600;
}
.tab-active { background: #4c5d6c; color: #fff; }

.map { position: relative; overflow: hidden; border-radius: 16px; }
.chart { display: block; width: 100%; height: auto; }
.chart path { vector-effect: non-scaling-stroke; }
.land { fill: #f5f4f0; }
.green { fill: #e8e9de; }
.green-deep { fill: #e2e4d4; }
.sand { fill: #ece4c6; }
.streak { fill: #f5f4f0; }
.streak-green { fill: #e8e9de; }
.sea { fill: #cdedfe; }
.stream { fill: none; stroke: #cdedfe; stroke-width: 3; }
.road { fill: none; stroke: #e8dfcf; stroke-width: 3; stroke-linejoin: round; }
.road .dense { stroke-width: 2; }
.border { fill: none; stroke: #c2c1bb; stroke-width: 2; }
.border-strong { fill: none; stroke: #97968b; stroke-width: 3; }
.labels {
  font-family: "Noto Sans CJK KR", "Noto Sans", sans-serif;
  font-size: 18px;
  fill: #6e6c61;
  stroke: #f8f7f3;
  stroke-width: 4px;
  stroke-linejoin: round;
  paint-order: stroke;
  text-anchor: middle;
}
.labels .m { font-size: 19px; }
.labels .l { font-size: 22px; }
.labels .country { font-size: 25px; font-weight: 500; fill: #57553f; }
.labels .xl { font-size: 33px; }
.labels .start { text-anchor: start; }
.labels .end { text-anchor: end; }
.labels .park { fill: #7f8a35; font-family: Roboto, "DejaVu Sans", sans-serif; font-weight: 500; }
.labels .arabic { direction: ltr; unicode-bidi: bidi-override; font-family: "DejaVu Sans", sans-serif; font-size: 19px; font-weight: 400; }
.labels .gulf { fill: #c7e6fc; stroke: none; font-size: 22px; font-style: italic; letter-spacing: 5px; }
.tree { fill: #75802a; }

.marker {
  position: absolute;
  left: 1070px;
  top: 446px;
  width: 37px;
  height: 37px;
  background: #e8463c;
  color: #fff;
  font-size: 15px;
  font-weight: 700;
  line-height: 37px;
  text-align: center;
}
.tip { position: absolute; left: 1130px; top: 448px; width: 20px; height: 34px; fill: #fff; }
.popup {
  position: absolute;
  left: 1148px;
  top: 197px;
  width: 728px;
  padding: 32px 34px 34px;
  border: 1px solid #dde3e6;
  border-radius: 28px;
  background: #fff;
  box-shadow: 0 20px 50px rgba(0, 0, 0, .16);
}
.popup-head { display: flex; align-items: center; gap: 21px; height: 44px; white-space: nowrap; }
.popup h2 { margin: 0; font-size: 35px; font-weight: 500; }
.badge { height: 40px; padding: 0 6px; border-radius: 2px; background: #c5fde4; color: #559c78; font-size: 20px; font-weight: 600; line-height: 40px; }
.risk-link { display: block; margin-top: 20px; font-size: 27px; font-weight: 500; line-height: 36px; text-decoration-thickness: 3px; }
.popup-tabs { display: flex; gap: 13px; margin: 19px 0 29px; }
.chip { height: 55px; padding: 0 18px; border-radius: 10px; background: #dedfe1; color: #0c0c0c; font-size: 20px; font-weight: 600; }
.chip-dark { background: #3a4c57; color: #fff; }
.detail { padding: 37px 31px 32px; border-radius: 16px; background: #f7f7f7; }
.bar { height: 11px; margin: 40px 0 20px; background: #e8463c; }
.swatch { flex: none; width: 22px; height: 22px; border-radius: 2px; }
.red { background: #e8463c; margin: 5px 0 0 1px; }
.detail-row { display: flex; gap: 22px; color: #7b8a92; font-size: 24px; font-weight: 400; line-height: 35px; }
.detail-row p { margin: 0; }

.legend {
  position: absolute;
  top: 28px;
  right: 27px;
  width: 304px;
  margin: 0;
  padding: 6px 20px;
  border: 2px solid #c4cbd0;
  border-radius: 14px;
  background: #fff;
  font-size: 23px;
  list-style: none;
}
.legend li { display: flex; align-items: center; gap: 14px; height: 47px; }
.legend a { color: #2f6f94; font-weight: 600; }
.high { background: #ec5850; }
.medium { background: #eda93b; }
.ports { background: #c5cacd; }
.toggle { display: flex; margin-left: auto; padding: 6px; }
.ring { width: 24px; height: 24px; margin-right: -2px; fill: none; stroke-width: 5; }
.reset {
  position: absolute;
  left: 28px;
  bottom: 28px;
  height: 61px;
  padding: 0 29px;
  border-radius: 10px;
  background: #fff;
  box-shadow: 0 3px 10px rgba(0, 0, 0, .2);
  color: #1c1c1c;
  font-size: 21px;
  font-weight: 500;
}
.full {
  position: absolute;
  left: 16px;
  bottom: 34px;
  width: 55px;
  height: 55px;
  border-radius: 8px;
  background: #fff;
  box-shadow: 0 0 0 3px rgba(0, 0, 0, .12);
}
.full svg { display: block; width: 36px; height: 36px; margin: auto; fill: #2b2b2b; }
.zoom {
  position: absolute;
  right: 18px;
  bottom: 17px;
  width: 52px;
  border-radius: 8px;
  background: #fff;
  box-shadow: 0 0 0 3px rgba(0, 0, 0, .12);
}
.zoom button { display: block; width: 52px; height: 54px; }
.zoom button + button { border-top: 2px solid #dcdcdc; }
.zoom svg { display: block; width: 52px; height: 52px; fill: none; stroke: #2b2b2b; stroke-width: 6; stroke-linecap: round; }
.zoom .north { fill: #2b2b2b; stroke: none; }
.zoom .south { fill: #c8c8c8; stroke: none; }

.brand {
  display: flex;
  justify-content: flex-end;
  align-items: center;
  gap: 22px;
  margin: 52px 289px 0 0;
  color: #fff;
  font-size: 44px;
  font-weight: 600;
  line-height: 60px;
}
.brand svg { width: 52px; height: 51px; fill: #fff; }
```
